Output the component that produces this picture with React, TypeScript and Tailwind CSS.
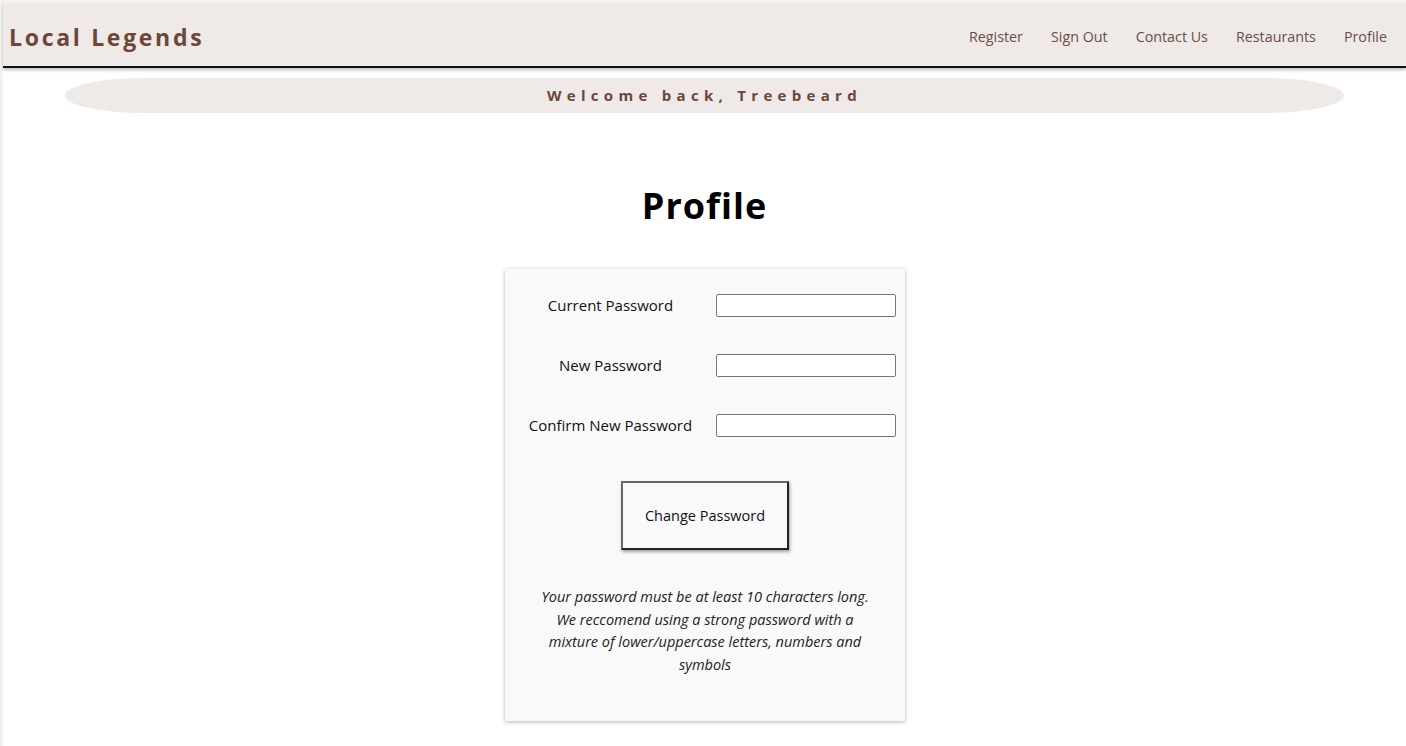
import React, { useState } from 'react';

const navLinks = ['Register', 'Sign Out', 'Contact Us', 'Restaurants', 'Profile'];

const fields = [
  { key: 'current', label: 'Current Password' },
  { key: 'new', label: 'New Password' },
  { key: 'confirm', label: 'Confirm New Password' },
];

export default function App() {
  const [values, setValues] = useState<Record<string, string>>({ current: '', new: '', confirm: '' });

  return (
    <div
      className="min-h-screen bg-white border-t-[3px] border-l-[3px] border-[#f2f2f2]"
      style={{ fontFamily: '"Open Sans", "Noto Sans", sans-serif' }}
    >
      {/* Header */}
      <header className="h-[65px] bg-[#efeae8] border-b-2 border-[#111] shadow-[0_2px_3px_rgba(0,0,0,0.25)] flex items-center justify-between pl-[6px] pr-[19px] pt-[5px]">
        <h1 className="text-[23px] font-bold tracking-[2.7px] text-[#6e4538]">Local Legends</h1>
        <nav className="flex items-center gap-[28px]">
          {navLinks.map((link) => (
            <a key={link} href="#" className="text-[14.3px] text-[#6b4e45]">
              {link}
            </a>
          ))}
        </nav>
      </header>

      {/* Welcome banner */}
      <div className="mx-[62px] mt-[10px] h-[35px] rounded-[80px_/_17.5px] bg-[#efeae8] flex items-center justify-center">
        <span className="text-[15px] font-bold tracking-[5.3px] text-[#6e4538]">Welcome back, Treebeard</span>
      </div>

      <h2 className="text-center text-[36px] font-bold tracking-[1px] text-black mt-[75px] leading-none">Profile</h2>

      {/* Card */}
      <div className="mx-auto mt-[45px] w-[400px] bg-[#f9f9f9] shadow-[0_1px_4px_rgba(0,0,0,0.3)] rounded-[2px] pt-[25px] pb-[45px] pl-[10px] pr-[9px]">
        <div className="flex flex-col gap-[37px]">
          {fields.map((f) => (
            <div key={f.key} className="grid grid-cols-[192px_180px] gap-[9px] items-center">
              <label className="text-center text-[15px] text-[#111]">{f.label}</label>
              <input
                type="password"
                value={values[f.key]}
                onChange={(e) => setValues({ ...values, [f.key]: e.target.value })}
                className="h-[23px] w-[180px] bg-white border border-[#767676] rounded-[2px] px-1 text-sm"
              />
            </div>
          ))}
        </div>

        <div className="flex justify-center mt-[44px]">
          <button
            type="button"
            className="w-[168px] h-[69px] border-2 border-[#222] border-t-[#666] border-l-[#666] bg-[#f9f9f9] text-[14.5px] text-[#111] shadow-[1px_2px_3px_rgba(0,0,0,0.35)]"
          >
            Change Password
          </button>
        </div>

        <p className="mt-[36px] mx-auto w-[345px] text-center italic text-[14.5px] leading-[22.5px] text-[#222]">
          Your password must be at least 10 characters long. We reccomend using a strong password with a mixture of
          lower/uppercase letters, numbers and symbols
        </p>
      </div>
    </div>
  );
}
